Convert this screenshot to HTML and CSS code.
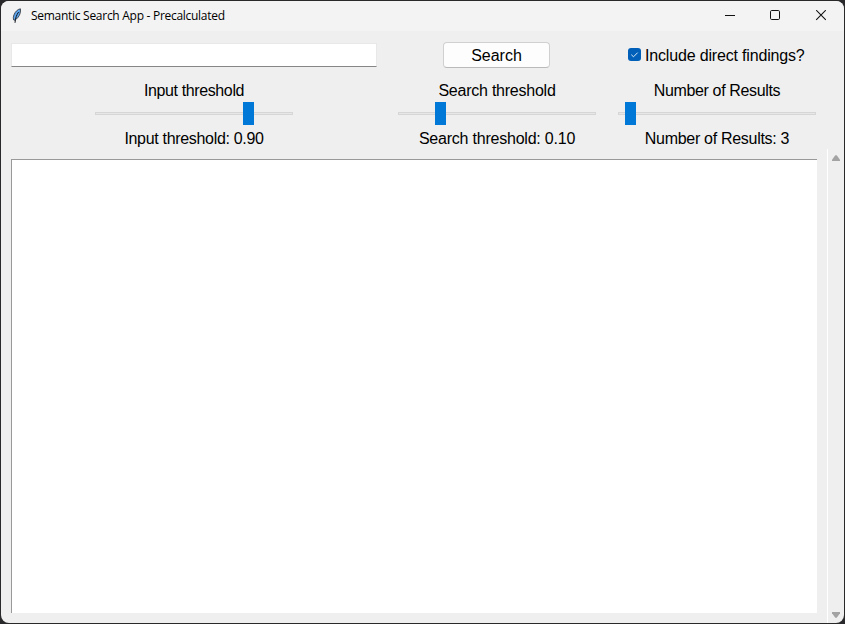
FILE: index.html
```html
<!DOCTYPE html>
<html lang="en">
<head>
<meta charset="utf-8">
<title>Semantic Search App - Precalculated</title>
<link rel="stylesheet" href="styles.css">
</head>
<body>
<div class="window">
  <header class="titlebar">
    <svg class="feather" width="12" height="18" viewBox="0 0 12 18">
      <path d="M9.400 1.800C6.600 2.300 4.300 4.600 3.100 7.600c-.9 2.200-1 4-.3 5.400l1.200.2C6.200 11.600 8.400 9.200 9.100 6.300c.4-1.700.5-3.100.3-4.500z" fill="#5ea6ee" stroke="#24272d" stroke-width=".8"/>
      <path d="M7.600 5C5.600 7.800 4.400 11 4 15.800" fill="none" stroke="#10141c" stroke-width="1"/>
    </svg>
    <span class="title">Semantic Search App - Precalculated</span>
    <svg class="controls" width="104" height="12" viewBox="0 0 104 12" fill="none" stroke="#111">
      <path d="M1 5.500h10"/>
      <rect x="46.500" y=".5" width="9" height="9" rx="1.200"/>
      <path d="M92.200.2l9.600 9.600M101.800.2l-9.600 9.600" stroke-width="1.100"/>
    </svg>
  </header>
  <main class="body">
    <section class="form">
      <div class="entry"></div>
      <button class="search">Search</button>
      <label class="check">
        <svg width="13" height="13" viewBox="0 0 13 13">
          <rect width="13" height="13" rx="3" fill="#005fb8"/>
          <path d="M3.300 6.700l2.200 2.100 4.200-4.200" fill="none" stroke="#d8eafa"/>
        </svg>
        <span>Include direct findings?</span>
      </label>
      <div class="scale input-scale">
        <span class="name">Input threshold</span>
        <div class="slider"><i class="thumb"></i></div>
        <span>Input threshold: 0.90</span>
      </div>
      <div class="scale search-scale">
        <span class="name">Search threshold</span>
        <div class="slider"><i class="thumb"></i></div>
        <span>Search threshold: 0.10</span>
      </div>
      <div class="scale results-scale">
        <span class="name">Number of Results</span>
        <div class="slider"><i class="thumb"></i></div>
        <span>Number of Results: 3</span>
      </div>
    </section>
    <section class="output">
      <div class="results"></div>
      <div class="scrollbar">
        <svg width="8" height="6" viewBox="0 0 8 6"><path d="M3.300.3h1.400L8 4.700V6H0V4.700z" fill="#a3a3a3"/></svg>
        <svg width="8" height="6" viewBox="0 0 8 6"><path d="M3.300 5.700h1.400L8 1.300V0H0v1.300z" fill="#a3a3a3"/></svg>
      </div>
    </section>
  </main>
</div>
</body>
</html>
```
FILE: styles.css
```css
* { box-sizing: border-box; }
body {
  margin: 0;
  height: 624px;
  padding: 1px;
  overflow: hidden;
  background: #29292b;
  font: 16px/19px "Liberation Sans", Arial, sans-serif;
  color: #000;
}
.window {
  height: 622px;
  border-radius: 8px;
  overflow: hidden;
  background: #efefef;
}
.titlebar {
  display: flex;
  align-items: center;
  height: 30px;
  padding: 0 16px 0 10px;
  background: #f3f3f3;
}
.title {
  margin-left: 8px;
  font: 12px/16px "Open Sans", "Noto Sans", sans-serif;
  letter-spacing: -0.28px;
  white-space: nowrap;
}
.controls { margin-left: auto; }
.body { padding: 11px 0 0 10px; }
.form {
  display: grid;
  grid-template-columns: 366px 220px 200px;
  grid-template-rows: 26px 67px;
  column-gap: 10px;
  row-gap: 13px;
  height: 107px;
}
.entry {
  height: 24px;
  margin-top: 1px;
  background: #fff;
  border: 1px solid #e8e8e8;
  border-bottom-color: #868686;
}
.search {
  width: 107px;
  height: 26px;
  margin-left: 56px;
  padding: 0;
  border: 1px solid #d0d0d0;
  border-bottom-color: #bababa;
  border-radius: 4px;
  background: #fdfdfd;
  font: inherit;
  color: inherit;
}
.check {
  display: flex;
  align-items: center;
  padding-left: 11px;
  gap: 4px;
  letter-spacing: -0.17px;
  white-space: nowrap;
}
.check svg { position: relative; top: -1px; }
.scale {
  display: flex;
  flex-direction: column;
  align-items: center;
}
.slider {
  display: flex;
  align-items: center;
  width: 198px;
  height: 23px;
  margin: 2px 0 4px;
  background:
    linear-gradient(#e7e7e7, #e7e7e7) 1px 11px / 196px 1px no-repeat,
    linear-gradient(#d6d6d6, #d6d6d6) 0 10px / 198px 3px no-repeat;
}
.thumb { width: 11px; height: 23px; background: #0078d7; }
.input-scale { letter-spacing: -0.32px; }
.input-scale .name { letter-spacing: -0.38px; }
.input-scale .thumb { margin-left: 148px; }
.search-scale { letter-spacing: -0.22px; }
.search-scale .name { letter-spacing: -0.24px; }
.search-scale .thumb { margin-left: 37px; }
.results-scale { letter-spacing: -0.3px; }
.results-scale .name { letter-spacing: -0.35px; }
.results-scale .thumb { margin-left: 7px; }
.output {
  display: flex;
  justify-content: space-between;
  height: 474px;
}
.results {
  width: 806px;
  height: 454px;
  margin-top: 10px;
  background: #fff;
  border: solid #999;
  border-width: 1px 0 0 1px;
}
.scrollbar {
  display: flex;
  flex-direction: column;
  align-items: center;
  justify-content: space-between;
  width: 17px;
  padding: 6px 0 5px;
  border-left: 1px solid #fff;
}
```
